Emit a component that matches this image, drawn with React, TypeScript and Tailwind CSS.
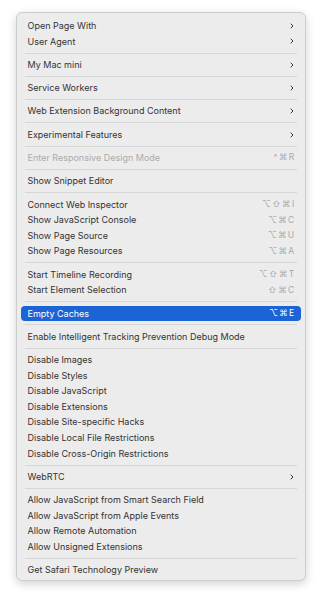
import { ChevronRight } from "lucide-react";

type Item =
  | { type: "sep" }
  | { type: "item"; label: string; shortcut?: string; sub?: boolean; disabled?: boolean; active?: boolean };

const items: Item[] = [
  { type: "item", label: "Open Page With", sub: true },
  { type: "item", label: "User Agent", sub: true },
  { type: "sep" },
  { type: "item", label: "My Mac mini", sub: true },
  { type: "sep" },
  { type: "item", label: "Service Workers", sub: true },
  { type: "sep" },
  { type: "item", label: "Web Extension Background Content", sub: true },
  { type: "sep" },
  { type: "item", label: "Experimental Features", sub: true },
  { type: "sep" },
  { type: "item", label: "Enter Responsive Design Mode", shortcut: "^⌘R", disabled: true },
  { type: "sep" },
  { type: "item", label: "Show Snippet Editor" },
  { type: "sep" },
  { type: "item", label: "Connect Web Inspector", shortcut: "⌥⇧⌘I" },
  { type: "item", label: "Show JavaScript Console", shortcut: "⌥⌘C" },
  { type: "item", label: "Show Page Source", shortcut: "⌥⌘U" },
  { type: "item", label: "Show Page Resources", shortcut: "⌥⌘A" },
  { type: "sep" },
  { type: "item", label: "Start Timeline Recording", shortcut: "⌥⇧⌘T" },
  { type: "item", label: "Start Element Selection", shortcut: "⇧⌘C" },
  { type: "sep" },
  { type: "item", label: "Empty Caches", shortcut: "⌥⌘E", active: true },
  { type: "sep" },
  { type: "item", label: "Enable Intelligent Tracking Prevention Debug Mode" },
  { type: "sep" },
  { type: "item", label: "Disable Images" },
  { type: "item", label: "Disable Styles" },
  { type: "item", label: "Disable JavaScript" },
  { type: "item", label: "Disable Extensions" },
  { type: "item", label: "Disable Site-specific Hacks" },
  { type: "item", label: "Disable Local File Restrictions" },
  { type: "item", label: "Disable Cross-Origin Restrictions" },
  { type: "sep" },
  { type: "item", label: "WebRTC", sub: true },
  { type: "sep" },
  { type: "item", label: "Allow JavaScript from Smart Search Field" },
  { type: "item", label: "Allow JavaScript from Apple Events" },
  { type: "item", label: "Allow Remote Automation" },
  { type: "item", label: "Allow Unsigned Extensions" },
  { type: "sep" },
  { type: "item", label: "Get Safari Technology Preview" },
];

export default function App() {
  return (
    <div className="w-[322px] h-[600px] bg-white pt-[12px] pl-[16px] font-['Inter',sans-serif]">
      {/* Menu panel */}
      <div className="w-[290px] rounded-[6px] border border-[#cdcdcd] bg-[#ececec] pt-[5px] pb-[2px] shadow-[0_3px_10px_rgba(0,0,0,0.18)]">
        {items.map((it, i) =>
          it.type === "sep" ? (
            <div key={i} className="h-[7.7px] flex items-center px-[8px]">
              <div className="h-px w-full bg-[#d6d6d6]" />
            </div>
          ) : (
            <div
              key={i}
              className={`h-[15.6px] mx-[4px] px-[6.5px] flex items-center justify-between rounded-[4px] text-[9px] ${
                it.active ? "bg-[#1c63d5] text-white" : it.disabled ? "text-[#ababab]" : "text-[#333333]"
              }`}
            >
              <span>{it.label}</span>
              {it.sub && <ChevronRight className="w-[8px] h-[8px] text-[#3a3a3a] -mr-[1px]" strokeWidth={3} />}
              {it.shortcut && (
                <span className={`text-[8.5px] tracking-[1.3px] -mr-[1px] ${it.active ? "text-white" : "text-[#a8a8a8]"}`}>
                  {it.shortcut}
                </span>
              )}
            </div>
          )
        )}
      </div>
    </div>
  );
}
